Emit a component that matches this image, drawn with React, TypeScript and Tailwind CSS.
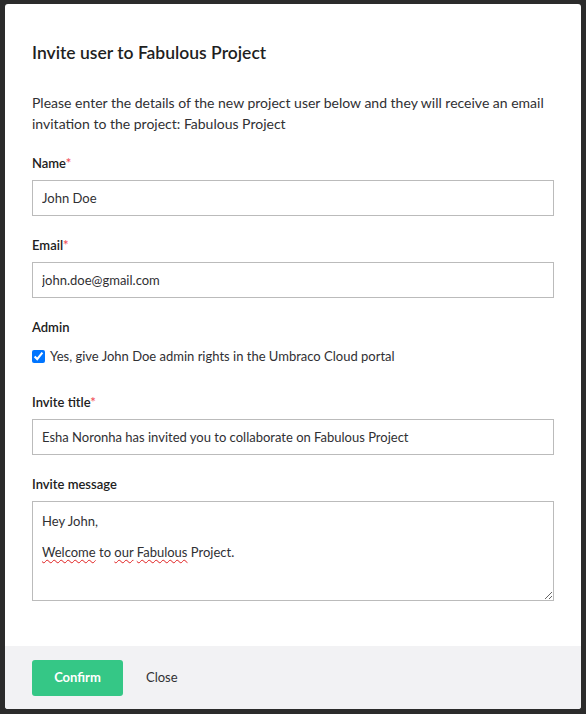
const Field = ({
  label,
  required,
  value,
}: {
  label: string
  required?: boolean
  value: string
}) => (
  <div className="mb-[19px] flex flex-col">
    <label className="mb-[7px] text-[13px] leading-[20px] font-semibold text-[#212121]">
      {label}
      {required && <span className="text-[#f0525a]">*</span>}
    </label>
    <input
      readOnly
      value={value}
      className="h-[36px] w-full border border-[#bbbbbb] bg-white px-[9px] text-[13px] text-[#303033] outline-none"
    />
  </div>
)

const App = () => (
  <div
    className="flex h-[714px] w-[586px] bg-[#2b2b2b] pt-[4px] pl-[5px]"
    style={{ fontFamily: "Lato, 'Open Sans', sans-serif" }}
  >
    <div className="flex h-[705px] w-[576px] flex-col overflow-hidden rounded-[3px] bg-white">
      <div className="flex-1 px-[27px] pt-[37px]">
        <h2 className="text-[17.5px] leading-[24px] font-semibold text-[#1f1f1f]">
          Invite user to Fabulous Project
        </h2>
        <p className="mt-[27px] mb-[19px] text-[14px] leading-[21px] text-[#303033]">
          Please enter the details of the new project user below and they will
          receive an email invitation to the project: Fabulous Project
        </p>

        <Field label="Name" required value="John Doe" />
        <Field label="Email" required value="john.doe@gmail.com" />

        <div className="mb-[20px] flex flex-col">
          <span className="mb-[10px] text-[13px] leading-[20px] font-semibold text-[#212121]">
            Admin
          </span>
          <label className="flex items-center gap-[5px] text-[13px] leading-[18px] text-[#303033]">
            <input
              type="checkbox"
              defaultChecked
              className="m-0 h-[13px] w-[13px] accent-[#0075ff]"
            />
            Yes, give John Doe admin rights in the Umbraco Cloud portal
          </label>
        </div>

        <div className="pt-[7px]">
          <Field
            label="Invite title"
            required
            value="Esha Noronha has invited you to collaborate on Fabulous Project"
          />
        </div>

        <div className="flex flex-col">
          <span className="mb-[7px] text-[13px] leading-[20px] font-semibold text-[#212121]">
            Invite message
          </span>
          <div className="h-[100px] w-full resize overflow-auto border border-[#bbbbbb] px-[9px] pt-[9px] text-[13px] leading-[21px] text-[#303033]">
            <div>Hey John,</div>
            <div className="mt-[10px]">
              <span className="underline decoration-[#e02020] decoration-wavy decoration-1 underline-offset-2">
                Welcome
              </span>{" "}
              to{" "}
              <span className="underline decoration-[#e02020] decoration-wavy decoration-1 underline-offset-2">
                our
              </span>{" "}
              <span className="underline decoration-[#e02020] decoration-wavy decoration-1 underline-offset-2">
                Fabulous
              </span>{" "}
              Project.
            </div>
          </div>
        </div>
      </div>

      <div className="flex h-[63px] items-center gap-[23px] bg-[#f2f2f4] px-[27px]">
        <button className="h-[36px] w-[91px] rounded-[3px] bg-[#35c786] text-[13px] font-bold text-white">
          Confirm
        </button>
        <button className="text-[13px] text-[#303033]">Close</button>
      </div>
    </div>
  </div>
)

export default App
